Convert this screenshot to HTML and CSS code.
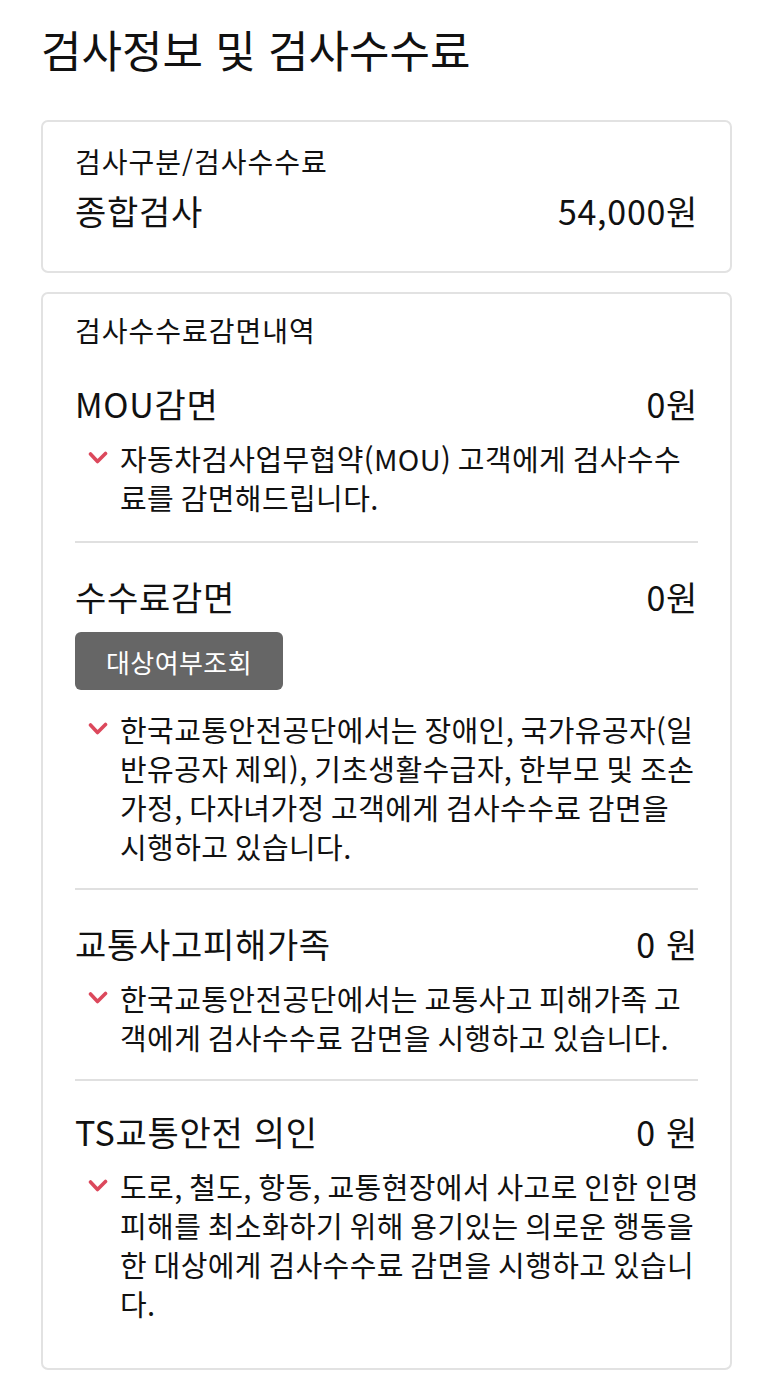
FILE: index.html
```html
<!DOCTYPE html>
<html lang="ko">
<head>
  <meta charset="utf-8">
  <title>검사정보 및 검사수수료</title>
  <link rel="stylesheet" href="styles.css">
</head>
<body>
  <h1 class="page-title">검사정보 및 검사수수료</h1>

  <div class="card">
    <div class="card-label">검사구분/검사수수료</div>
    <div class="row main-row">
      <span>종합검사</span>
      <span>54,000원</span>
    </div>
  </div>

  <div class="card discount-card">
    <div class="card-label">검사수수료감면내역</div>

    <div class="section first">
      <div class="row">
        <span>MOU감면</span>
        <span>0원</span>
      </div>
      <div class="note">
        <svg class="check" viewBox="0 0 20 14"><polyline points="2.5,3 9.5,10.5 17.5,2.5"/></svg>
        자동차검사업무협약(MOU) 고객에게 검사수수<br>료를 감면해드립니다.
      </div>
    </div>

    <div class="section">
      <div class="row">
        <span>수수료감면</span>
        <span>0원</span>
      </div>
      <button class="lookup">대상여부조회</button>
      <div class="note">
        <svg class="check" viewBox="0 0 20 14"><polyline points="2.5,3 9.5,10.5 17.5,2.5"/></svg>
        한국교통안전공단에서는 장애인, 국가유공자(일<br>반유공자 제외), 기초생활수급자, 한부모 및 조손<br>가정, 다자녀가정 고객에게 검사수수료 감면을<br>시행하고 있습니다.
      </div>
    </div>

    <div class="section">
      <div class="row">
        <span>교통사고피해가족</span>
        <span>0 원</span>
      </div>
      <div class="note">
        <svg class="check" viewBox="0 0 20 14"><polyline points="2.5,3 9.5,10.5 17.5,2.5"/></svg>
        한국교통안전공단에서는 교통사고 피해가족 고<br>객에게 검사수수료 감면을 시행하고 있습니다.
      </div>
    </div>

    <div class="section last">
      <div class="row">
        <span>TS교통안전 의인</span>
        <span>0 원</span>
      </div>
      <div class="note">
        <svg class="check" viewBox="0 0 20 14"><polyline points="2.5,3 9.5,10.5 17.5,2.5"/></svg>
        도로, 철도, 항동, 교통현장에서 사고로 인한 인명<br>피해를 최소화하기 위해 용기있는 의로운 행동을<br>한 대상에게 검사수수료 감면을 시행하고 있습니<br>다.
      </div>
    </div>
  </div>
</body>
</html>
```

FILE: styles.css
```css
body {
  margin: 0;
  padding: 21px 41px 12px;
  font-family: "Noto Sans CJK KR", "Noto Sans", sans-serif;
  color: #111;
  background: #fff;
}

.page-title {
  margin: 0 0 43px;
  font-size: 44px;
  line-height: 56px;
  font-weight: 400;
}

.card {
  border: 2px solid #e2e2e2;
  border-radius: 7px;
  padding: 21px 32px 38px;
  margin-bottom: 19px;
}

.discount-card {
  padding-top: 18px;
  padding-bottom: 45px;
  margin-bottom: 0;
}

.card-label {
  font-size: 28px;
  line-height: 36px;
  letter-spacing: 1px;
}

.row {
  display: flex;
  justify-content: space-between;
  font-size: 34px;
  line-height: 44px;
  letter-spacing: 0.7px;
}

.main-row {
  margin-top: 10px;
}

.section {
  padding: 32px 0 22px;
  border-bottom: 2px solid #e0e0e0;
}

.section.first {
  padding-top: 34px;
  padding-bottom: 24px;
}

.section.last {
  border-bottom: none;
  padding-top: 29px;
  padding-bottom: 0;
}

.note {
  position: relative;
  margin-top: 13px;
  padding-left: 45px;
  font-size: 29px;
  line-height: 39px;
  letter-spacing: 0.4px;
  word-spacing: -2px;
  white-space: nowrap;
}

.check {
  position: absolute;
  left: 13px;
  top: 12px;
  width: 20px;
  height: 14px;
  fill: none;
  stroke: #dc485c;
  stroke-width: 3.6;
  stroke-linecap: round;
  stroke-linejoin: round;
}

.lookup {
  display: block;
  margin-top: 13px;
  width: 208px;
  height: 58px;
  border: none;
  border-radius: 6px;
  background: #666;
  color: #fff;
  font-family: inherit;
  font-size: 26px;
  letter-spacing: 0.4px;
}

.lookup + .note {
  margin-top: 20px;
}
```
